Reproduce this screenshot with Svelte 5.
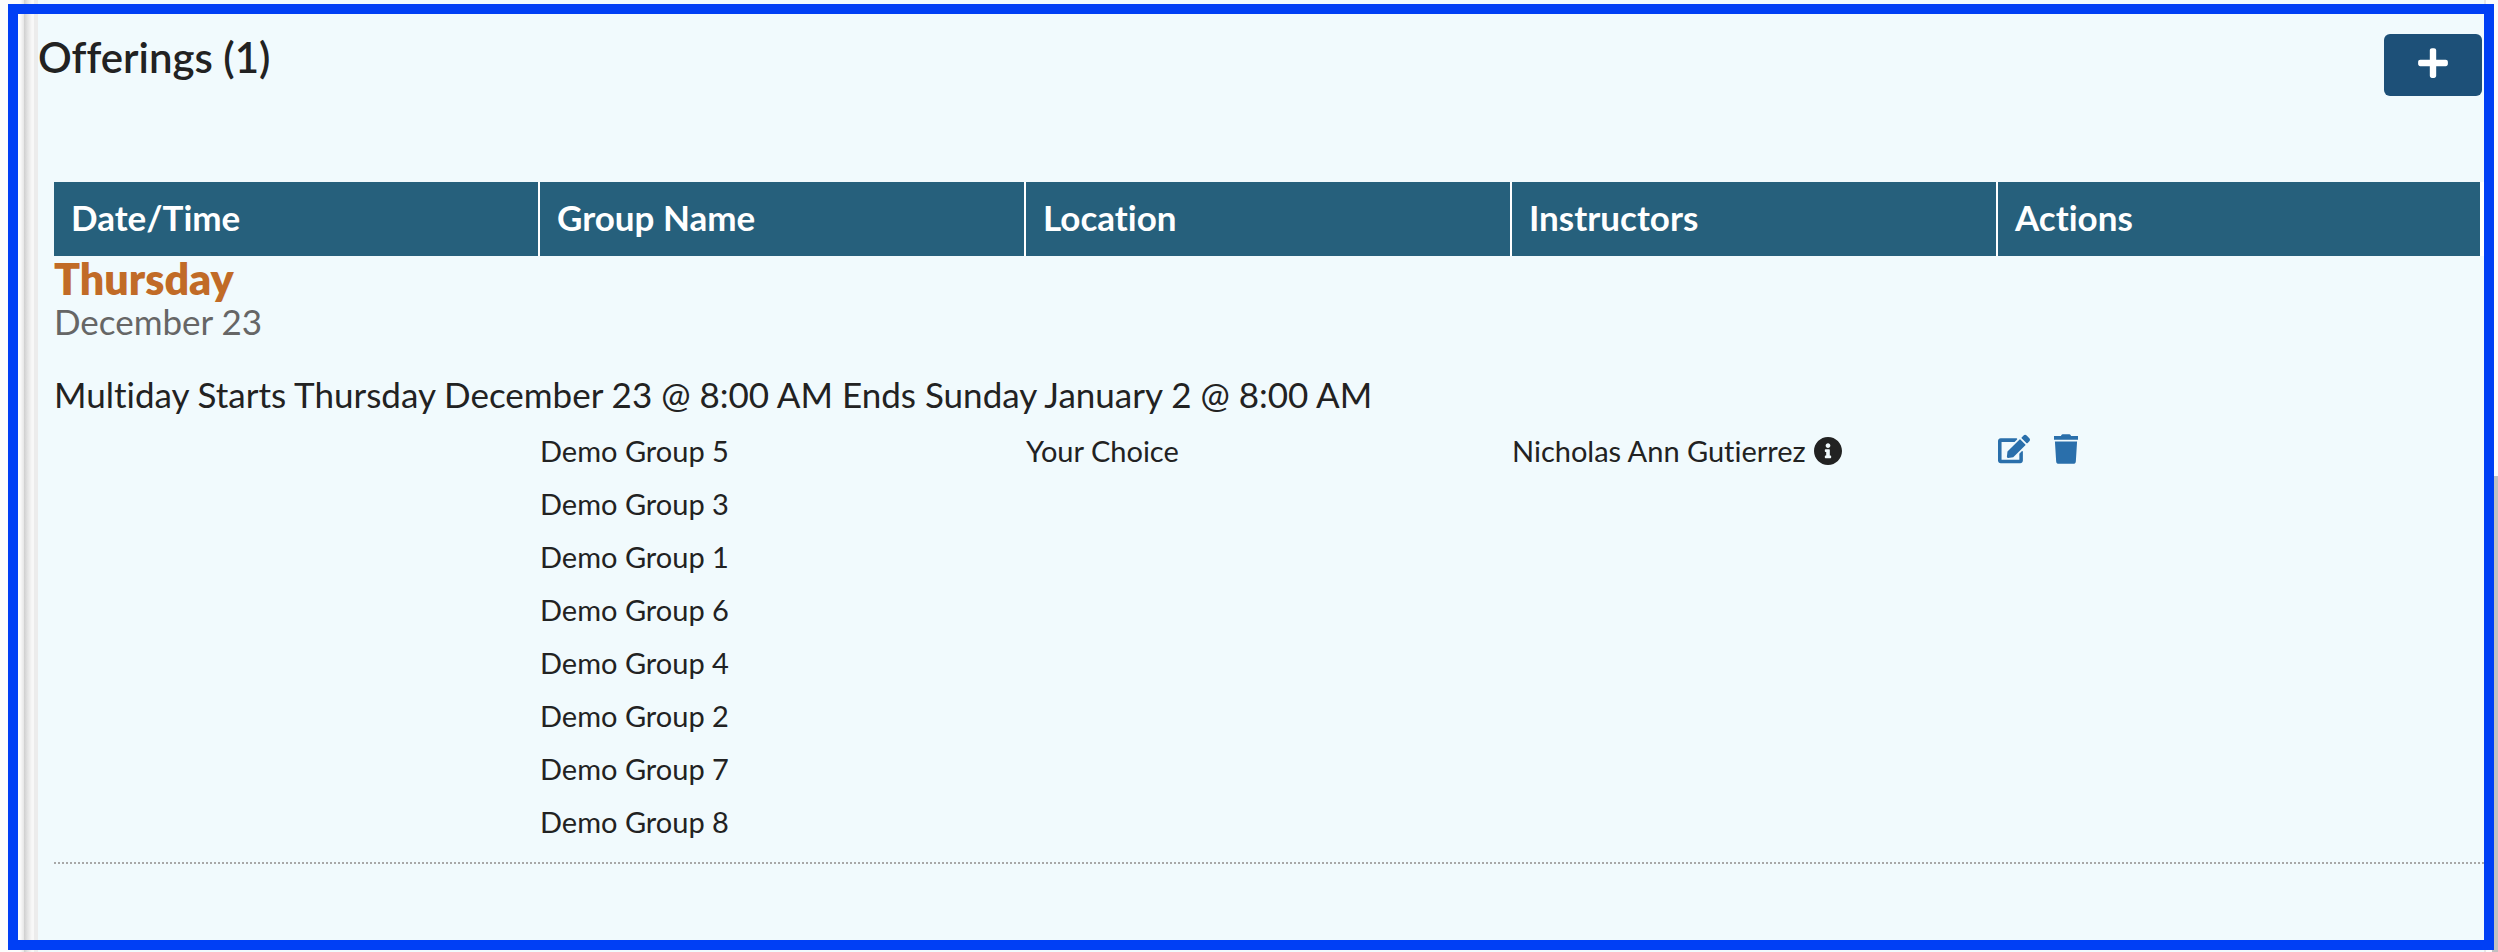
<script>
  const columns = ['Date/Time', 'Group Name', 'Location', 'Instructors', 'Actions'];
  const groups = [5, 3, 1, 6, 4, 2, 7, 8].map((n) => `Demo Group ${n}`);
</script>

<div class="page">
  <div class="gutter"></div>
  <main class="panel">
    <header class="heading">
      <h1>Offerings (1)</h1>
      <button class="add" type="button" aria-label="Add offering">
        <svg viewBox="0 0 448 512" width="30" height="34" aria-hidden="true">
          <path fill="#fff" d="M416 208H272V64c0-17.700-14.300-32-32-32h-32c-17.700 0-32 14.300-32 32v144H32c-17.700 0-32 14.300-32 32v32c0 17.700 14.300 32 32 32h144v144c0 17.700 14.300 32 32 32h32c17.700 0 32-14.300 32-32V304h144c17.700 0 32-14.300 32-32v-32c0-17.700-14.300-32-32-32z" />
        </svg>
      </button>
    </header>

    <table>
      <thead>
        <tr>
          {#each columns as column}
            <th scope="col">{column}</th>
          {/each}
        </tr>
      </thead>
      <tbody>
        <tr>
          <td colspan="5" class="day">
            <h2>Thursday</h2>
            <p>December 23</p>
          </td>
        </tr>
        <tr>
          <td colspan="5" class="span">Multiday Starts Thursday December 23 @ 8:00 AM Ends Sunday January 2 @ 8:00 AM</td>
        </tr>
        <tr class="offering">
          <td></td>
          <td>
            <ul>
              {#each groups as group}
                <li>{group}</li>
              {/each}
            </ul>
          </td>
          <td>Your Choice</td>
          <td>
            <div class="inline person">
              <span>Nicholas Ann Gutierrez</span>
              <button class="icon" type="button" aria-label="Instructor details">
                <svg viewBox="8 8 496 496" width="28" height="28" aria-hidden="true">
                  <path fill="#222" d="M256 8C119 8 8 119 8 256s111 248 248 248 248-111 248-248S393 8 256 8zm0 110c23.200 0 42 18.800 42 42s-18.800 42-42 42-42-18.800-42-42 18.800-42 42-42zm56 254c0 6.600-5.400 12-12 12h-88c-6.600 0-12-5.400-12-12v-24c0-6.600 5.400-12 12-12h12v-64h-12c-6.600 0-12-5.400-12-12v-24c0-6.600 5.400-12 12-12h64c6.600 0 12 5.400 12 12v100h12c6.600 0 12 5.400 12 12v24z" />
                </svg>
              </button>
            </div>
          </td>
          <td>
            <div class="inline actions">
              <button class="icon" type="button" aria-label="Edit offering">
                <svg viewBox="0 0 576 512" width="32" height="30" aria-hidden="true">
                  <path fill="#2a6fab" d="M402.600 83.200l90.200 90.200c3.800 3.800 3.800 10 0 13.800L274.400 405.600l-92.800 10.300c-12.400 1.400-22.900-9.100-21.500-21.500l10.300-92.800L388.800 83.200c3.800-3.800 10-3.800 13.800 0zm162-22.900l-48.800-48.800c-15.200-15.200-39.900-15.200-55.200 0l-35.400 35.400c-3.800 3.800-3.800 10 0 13.800l90.200 90.200c3.800 3.800 10 3.800 13.800 0l35.400-35.400c15.200-15.300 15.200-40 0-55.200zM384 346.200V448H64V128h229.800c3.200 0 6.200-1.300 8.500-3.500l40-40c7.600-7.600 2.200-20.500-8.500-20.500H48C21.500 64 0 85.500 0 112v352c0 26.500 21.500 48 48 48h352c26.500 0 48-21.500 48-48V306.200c0-10.700-12.900-16-20.500-8.500l-40 40c-2.200 2.300-3.500 5.300-3.500 8.500z" />
                </svg>
              </button>
              <button class="icon" type="button" aria-label="Delete offering">
                <svg viewBox="0 0 416 512" width="24" height="30" aria-hidden="true">
                  <path fill="#2a6fab" d="M416 32H296l-9.400-18.700A24 24 0 0 0 265.100 0H150.800a23.720 23.720 0 0 0-21.400 13.300L120 32H0v64h416V32zM16 128l21.200 339a48 48 0 0 0 47.900 45h245.800a48 48 0 0 0 47.900-45L400 128z" />
                </svg>
              </button>
            </div>
          </td>
        </tr>
      </tbody>
    </table>
  </main>
  <div class="edge"></div>
  <div class="frame"></div>
</div>

<style>
  :global(body) {
    margin: 0;
    background: #fcfcfc;
  }
  .page {
    position: relative;
    display: flex;
    min-height: 100vh;
    box-sizing: border-box;
    overflow: hidden;
    color: #222;
    font-family: Lato, 'Noto Sans', sans-serif;
    font-size: 29px;
    font-variant-ligatures: none;
  }
  .gutter {
    flex: none;
    width: 14px;
    margin-left: 20px;
    background: linear-gradient(to right, #fcfcfc 0, #e6e6e6 4px, #cfcfcf 4px, #e6e6e6 8px, #f8f8f8 12px, #f8f8f8 14px);
  }
  .panel {
    flex: 1;
    min-width: 0;
    padding: 34px 0 16px;
    border-left: 4px solid #ececec;
    background: #f1fafd;
  }
  .heading {
    display: flex;
    justify-content: space-between;
    align-items: flex-start;
    padding-right: 2px;
    margin-bottom: 86px;
  }
  h1 {
    margin: 0;
    font-size: 42px;
    line-height: 46px;
    font-weight: 600;
  }
  .add {
    display: flex;
    align-items: center;
    justify-content: center;
    width: 98px;
    height: 62px;
    padding: 0 0 4px;
    border: 0;
    border-radius: 6px;
    background: #1d5078;
  }
  table {
    width: calc(100% - 16px);
    margin-left: 16px;
    border-collapse: separate;
    border-spacing: 0;
    table-layout: fixed;
    border-bottom: 2px dotted #a8a8a8;
  }
  th {
    height: 74px;
    box-sizing: border-box;
    padding: 0 17px 4px;
    border-right: 2px solid #fff;
    background: #26607c;
    color: #fff;
    font-size: 35px;
    line-height: 48px;
    font-weight: 700;
    text-align: left;
  }
  th:last-child {
    border-right-width: 4px;
  }
  td {
    padding: 0;
    vertical-align: top;
  }
  .day {
    padding-bottom: 24px;
  }
  h2 {
    margin: 0;
    color: #c16b27;
    font-size: 43px;
    line-height: 46px;
    font-weight: 800;
  }
  .day p {
    margin: 0;
    color: #666;
    font-size: 35px;
    line-height: 38px;
  }
  .span {
    font-size: 35px;
    line-height: 60px;
  }
  .offering td {
    line-height: 53px;
    padding-bottom: 14px;
  }
  ul {
    margin: 0;
    padding: 0;
    list-style: none;
  }
  .inline {
    display: flex;
    align-items: center;
  }
  .person {
    gap: 8px;
  }
  .actions {
    gap: 24px;
    height: 50px;
  }
  .icon {
    display: flex;
    padding: 0;
    border: 0;
    background: none;
  }
  .edge {
    flex: none;
    box-sizing: border-box;
    width: 14px;
    border-left: 2px solid #e6e6e6;
    background: linear-gradient(#c1c1c1, #c1c1c1) right bottom / 6px 50% no-repeat;
  }
  .frame {
    position: absolute;
    inset: 4px 4px 2px 8px;
    border: 10px solid #003ff5;
    pointer-events: none;
  }
</style>
